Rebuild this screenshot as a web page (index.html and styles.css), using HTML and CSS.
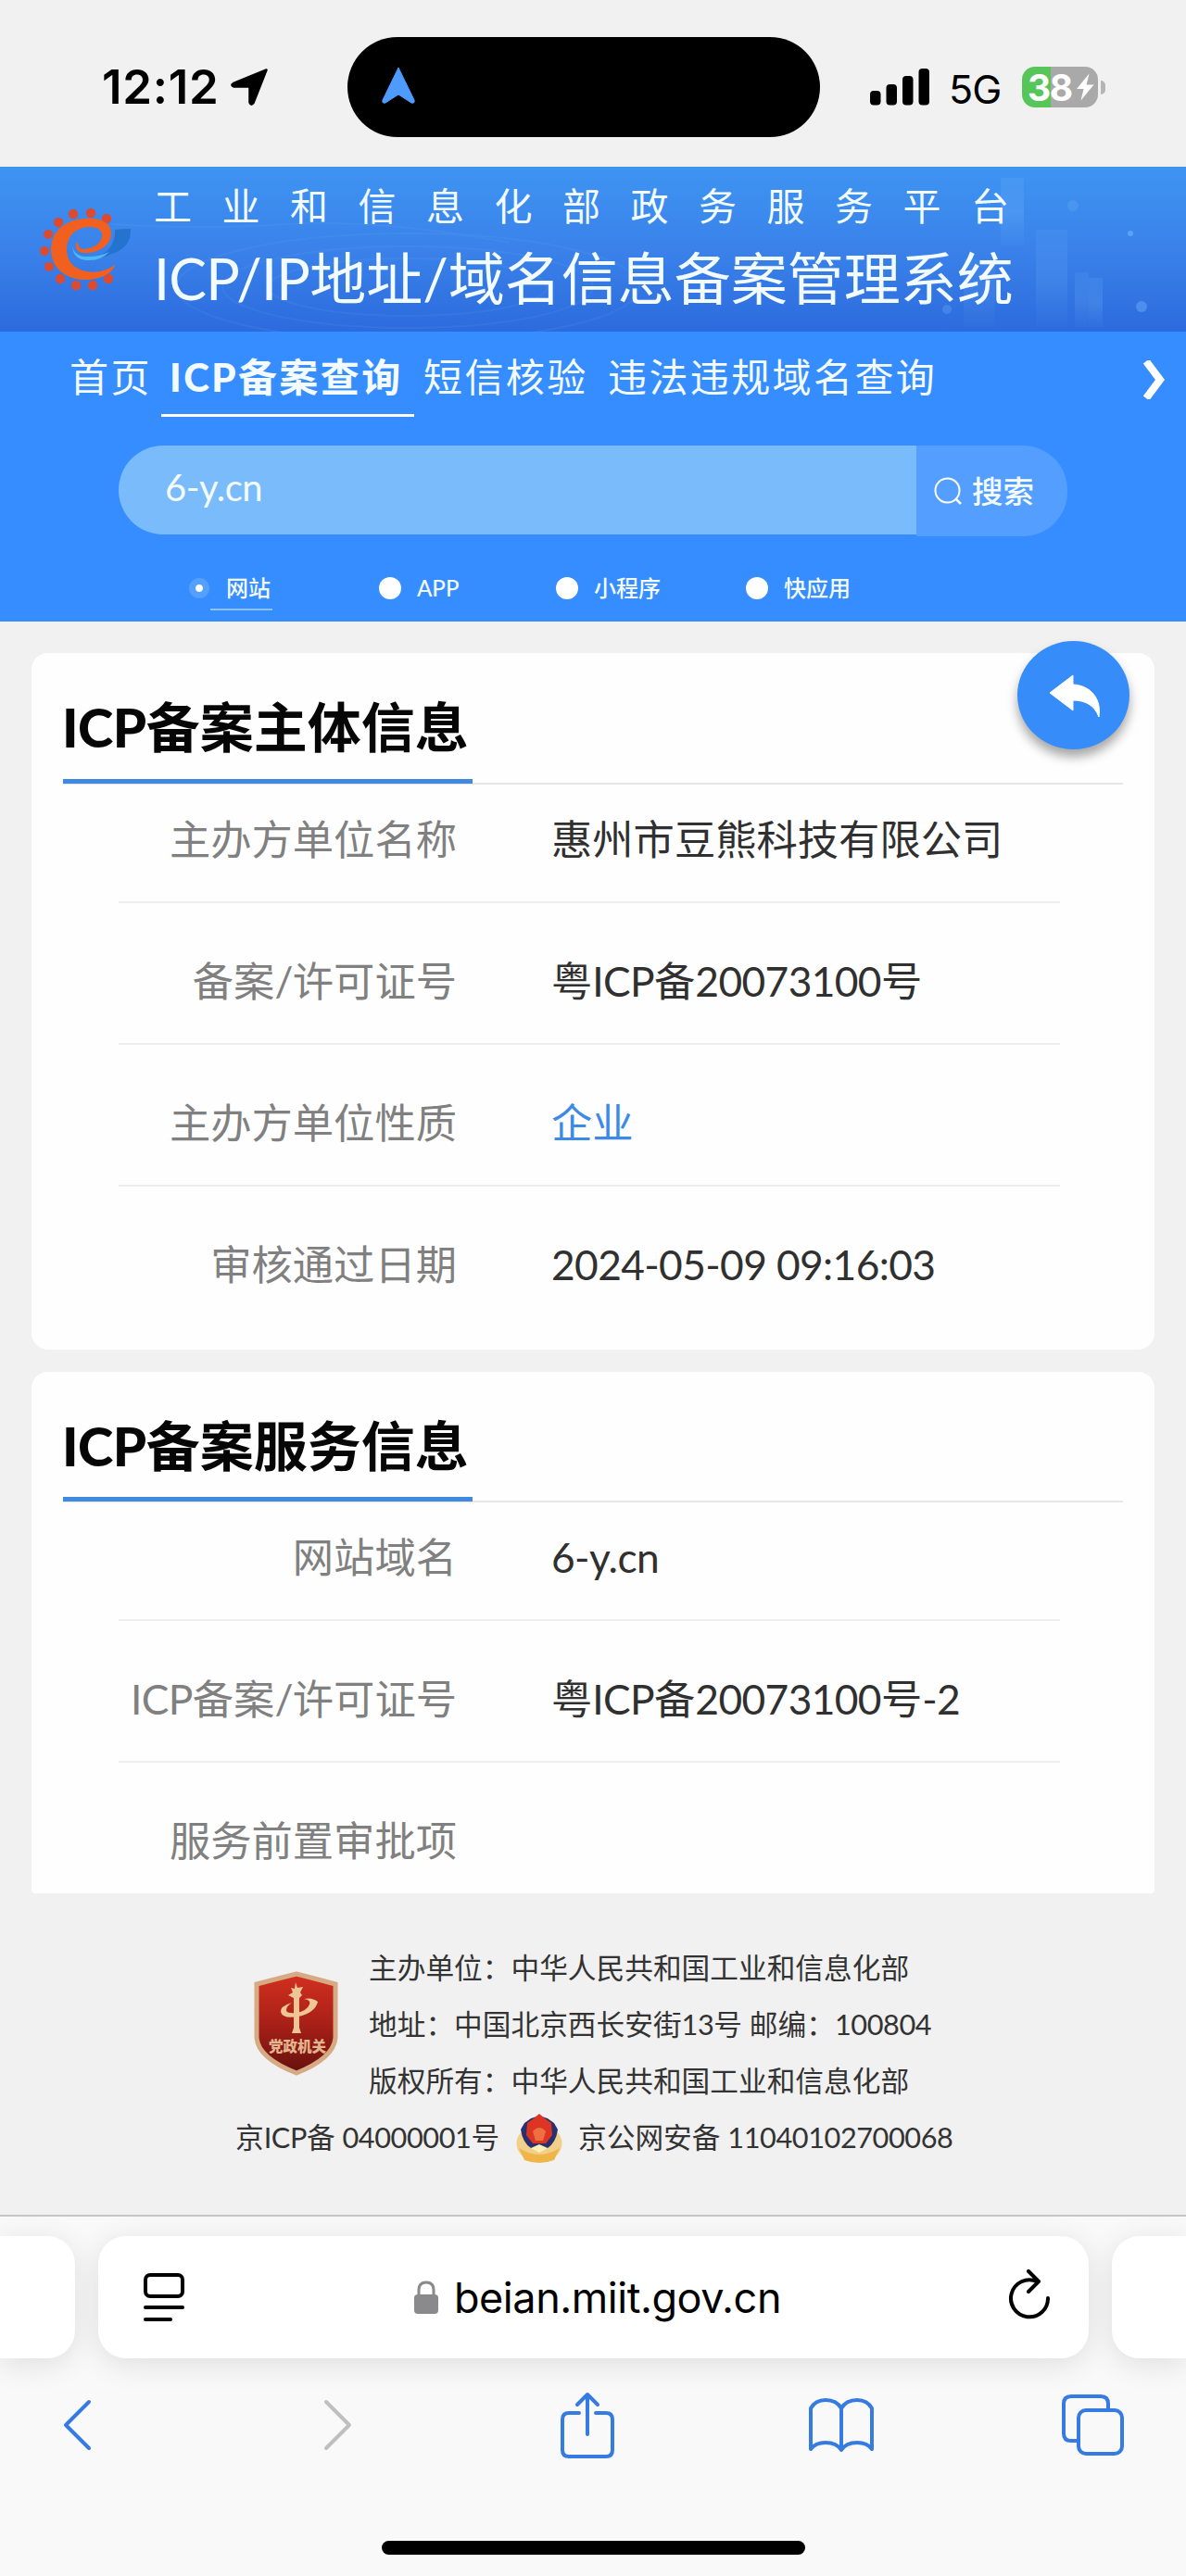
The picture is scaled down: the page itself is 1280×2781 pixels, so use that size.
FILE: index.html
```html
<!DOCTYPE html>
<html lang="zh-CN">
<head>
<meta charset="utf-8">
<title>ICP/IP地址/域名信息备案管理系统</title>
<link rel="stylesheet" href="styles.css">
</head>
<body>
<div class="statusbar">
  <div class="clock"><span class="time">12:12</span>
    <svg class="loc" width="40" height="40" viewBox="0 0 40 40"><path d="M38.500 1.500 24.500 37q-2.500 3.500-4-.5V19.500H3.500q-4-1.500-.5-3.500z" stroke="#000" stroke-width="2.500" stroke-linejoin="round"/></svg>
  </div>
  <div class="island"><svg width="38" height="41" viewBox="0 0 38 41"><path d="M19 1 36 36q1 4-3 3L19 30 5 39q-4 1-3-3z" fill="#4e9bff" stroke="#4e9bff" stroke-linejoin="round"/></svg></div>
  <div class="signals">
    <svg class="bars" width="66" height="40" viewBox="0 0 66 40"><rect x="0" y="24" width="11.500" height="15.500" rx="4"/><rect x="17.500" y="17" width="11.500" height="22.500" rx="4"/><rect x="35" y="8" width="11.500" height="31.500" rx="4"/><rect x="52.500" y="0" width="11.500" height="39.500" rx="4"/></svg>
    <span class="net">5G</span>
    <div class="battery"><span>38</span><svg width="20" height="30" viewBox="0 0 20 30"><path d="M14.500.500 1 17h7.500L5.500 29.500 19.500 12.500h-8z" fill="#fff"/></svg></div>
    <i class="nub"></i>
  </div>
</div>

<header class="banner">
  <svg class="skyline" width="1280" height="178" viewBox="0 0 1280 178">
    <defs><linearGradient id="beam" x1="0" y1="0" x2="0" y2="1"><stop offset="0" stop-color="#8fd0ff" stop-opacity=".6"/><stop offset=".5" stop-color="#8fd0ff"/><stop offset="1" stop-color="#8fd0ff" stop-opacity=".1"/></linearGradient></defs>
    <g fill="url(#beam)"><rect x="1080" y="12" width="25" height="74" opacity=".17"/><rect x="1118" y="68" width="34" height="106" opacity=".12"/><rect x="1160" y="114" width="15" height="60" opacity=".14"/><rect x="1175" y="120" width="15" height="54" opacity=".17"/><rect x="1040" y="100" width="34" height="74" opacity=".1"/></g>
    <g fill="#8fd0ff"><circle cx="1232" cy="151" r="6" opacity=".3"/><circle cx="1220" cy="72" r="3" opacity=".4"/><circle cx="1158" cy="42" r="6" opacity=".15"/><circle cx="1022" cy="154" r="5" opacity=".2"/></g>
    <g fill="none" stroke="#8fc4ff" stroke-width="2" opacity=".08"><ellipse cx="440" cy="130" rx="250" ry="58"/><ellipse cx="440" cy="130" rx="200" ry="44"/><ellipse cx="440" cy="130" rx="150" ry="31"/><path d="M120 62q90 6 190 0t240 20"/></g>
  </svg>
  <svg class="logo" width="104" height="96" viewBox="0 0 104 96">
    <path d="M84 24q10-1 17-1 1 20-20 27-8 4-16 4 20-10 19-30z" fill="#2673cf"/>
    <path d="M38 42q3 12 18 11 12 0 22-5-10 10-24 9-15-1-16-15z" fill="#4fb9f6"/>
    <g fill="#dc4a30"><circle cx="75" cy="12" r="5.200"/><circle cx="58" cy="6" r="5.200"/><circle cx="39" cy="7" r="5.200"/><circle cx="23" cy="16" r="5.200"/><circle cx="12" cy="29" r="5"/><circle cx="8" cy="47" r="5"/><circle cx="13" cy="64" r="5"/><circle cx="25" cy="77" r="5.200"/><circle cx="42" cy="84" r="5.200"/><circle cx="60" cy="84" r="5.200"/><circle cx="77" cy="77" r="5.200"/></g>
    <path d="M43 37C39 46 46 50 56 49 72 47 81 37 80 26 78 15 66 11 52 12 30 13 15 26 15 45 15 66 32 78 52 78 68 78 82 71 84 62 74 69 62 71 54 69 40 67 32 58 32 45 32 31 42 21 57 21 67 21 71 26 70 32 68 40 58 45 50 45 45 45 46 42 43 37Z" fill="#f2601f"/>
  </svg>
  <div class="titles"><div class="t1">工业和信息化部政务服务平台</div><div class="t2"><span>ICP/IP</span>地址/域名信息备案管理系统</div></div>
</header>

<section class="hero">
  <nav class="nav"><a>首页</a><a class="on"><span>ICP</span>备案查询</a><a>短信核验</a><a>违法违规域名查询</a>
    <svg class="more" width="26" height="42" viewBox="0 0 26 42"><path d="M4 1 19 21 4 41" fill="none" stroke="#fff" stroke-width="8"/></svg></nav>
  <div class="search"><div class="field">6-y.cn</div><div class="btn"><svg width="31" height="31" viewBox="0 0 31 31"><circle cx="14.500" cy="14.500" r="13" fill="none" stroke="#fff" stroke-width="2"/><path d="m24 24 5 5" stroke="#fff" stroke-width="2.500"/></svg><span>搜索</span></div></div>
  <div class="radios"><div class="r1"><i class="sel"></i><b>网站</b></div><div class="r2"><i></i><b>APP</b></div><div class="r3"><i></i><b>小程序</b></div><div class="r4"><i></i><b>快应用</b></div></div>
</section>

<main>
  <section class="card c1">
    <div class="back"><svg width="58" height="48" viewBox="0 0 58 48"><path d="M26 1 1 20l25 19V28c13 0 23 5 28 18C57 26 45 12 26 11z" fill="#fff" stroke="#fff" stroke-linejoin="round"/></svg></div>
    <h2><span><em>ICP</em>备案主体信息</span></h2>
    <dl>
      <div><dt>主办方单位名称</dt><dd>惠州市豆熊科技有限公司</dd></div>
      <div><dt>备案<span class="n">/</span>许可证号</dt><dd>粤<span class="n">ICP</span>备<span class="n">20073100</span>号</dd></div>
      <div><dt>主办方单位性质</dt><dd class="link">企业</dd></div>
      <div><dt>审核通过日期</dt><dd class="n">2024-05-09 09:16:03</dd></div>
    </dl>
  </section>
  <section class="card c2">
    <h2><span><em>ICP</em>备案服务信息</span></h2>
    <dl>
      <div><dt>网站域名</dt><dd class="n">6-y.cn</dd></div>
      <div><dt><span class="n">ICP</span>备案<span class="n">/</span>许可证号</dt><dd>粤<span class="n">ICP</span>备<span class="n">20073100</span>号<span class="n">-2</span></dd></div>
      <div><dt>服务前置审批项</dt><dd></dd></div>
    </dl>
  </section>
</main>

<footer>
  <div class="org">
    <svg width="92" height="113" viewBox="0 0 92 113">
      <defs><linearGradient id="red" x1="0" y1="0" x2="0" y2="1"><stop offset="0" stop-color="#d2301f"/><stop offset=".5" stop-color="#a92018"/><stop offset="1" stop-color="#64110e"/></linearGradient></defs>
      <path d="M3 14Q26 8 46 3q20 5 42 11v58q-2 22-42 38Q5 94 3 72z" fill="url(#red)" stroke="#d6aa83" stroke-width="5"/>
      <path d="m45 12 2 6 6-1-3 6 2 3-3 3v32l2 6H41l2-6V29l-6-3 5-3-2-5 4 1z" fill="#f0c595"/>
      <path d="M41 34q-13 4-12 10 2 8 19 5 18-4 21-16-6-5-15-3 8 1 6 6-3 7-14 9-11 1-11-3 0-4 6-8z" fill="#f0c595"/>
      <text x="47" y="87" text-anchor="middle" class="seal">党政机关</text>
    </svg>
    <div class="lines"><p>主办单位：中华人民共和国工业和信息化部</p><p>地址：中国北京西长安街<span class="n">13</span>号 邮编：<span class="n">100804</span></p><p>版权所有：中华人民共和国工业和信息化部</p></div>
  </div>
  <div class="reg"><span class="g1">京<span class="n">ICP</span>备 <span class="n">04000001</span>号</span>
    <svg width="52" height="56" viewBox="0 0 52 56"><ellipse cx="26" cy="33" rx="24.500" ry="20" fill="#f0d08a"/><path d="M4 38q22 14 44 0l-6 13q-16 6-32 0z" fill="#efb547"/><path d="M10 11l7-5q9-4 18 0l7 5 4 7q-2 14-11 20H17Q8 32 6 18z" fill="#29306f"/><path d="M26 1l6 5 7 5 1 13-7 9H19l-7-9 1-13 7-5z" fill="#de3424"/><path d="M19 20q7-8 14 0l-3 10h-8z" fill="#ee7040"/><path d="M17 38l9-4 9 4-9 5z" fill="#fff1b5"/></svg>
    <span class="g2">京公网安备 <span class="n">11040102700068</span></span></div>
</footer>

<div class="browser">
  <div class="tabs"><div class="side left"></div>
    <div class="url">
      <svg class="reader" width="46" height="54" viewBox="0 0 46 54" fill="none" stroke="#000" stroke-width="4" stroke-linecap="round"><rect x="3" y="3" width="40" height="23" rx="5"/><path d="M3 38h40M3 51h27"/></svg>
      <div class="host"><svg width="26" height="36" viewBox="0 0 26 36"><rect y="15" width="26" height="21" rx="4" fill="#8a8a8c"/><path d="M5 17V10q0-8 8-8t8 8v7" fill="none" stroke="#8a8a8c" stroke-width="3"/></svg><span>beian.miit.gov.cn</span></div>
      <svg class="reload" width="46" height="54" viewBox="0 0 46 54" fill="none" stroke="#000" stroke-width="4" stroke-linecap="round" stroke-linejoin="round"><path d="M43 31A20 20 0 1 1 31 13M22 2l11 11-11 11"/></svg>
    </div>
    <div class="side right"></div></div>
  <div class="tools">
    <svg class="prev" width="33" height="56" viewBox="0 0 33 56"><path d="M29 3 4 28l25 25"/></svg>
    <svg class="next" width="33" height="56" viewBox="0 0 33 56"><path d="m4 3 25 25L4 53"/></svg>
    <svg class="share" width="58" height="72" viewBox="0 0 58 72"><path d="M20 23H9q-7 0-7 7v33q0 7 7 7h40q7 0 7-7V30q0-7-7-7H38M29 46V3M18 14 29 3l11 11"/></svg>
    <svg class="book" width="72" height="60" viewBox="0 0 72 60"><path d="M36 12v45M36 12Q31 3 19 3 8 3 3 12v44q5-7 16-7 12 0 17 8 5-8 17-8 11 0 16 7V12Q64 3 53 3q-12 0-17 9z"/></svg>
    <svg width="68" height="66" viewBox="0 0 68 66"><rect x="18" y="17" width="47" height="47" rx="8"/><path d="M18 50h-8q-8 0-8-8V10q0-8 8-8h32q8 0 8 8v7"/></svg>
  </div>
  <div class="home"></div>
</div>
</body>
</html>
```
FILE: styles.css
```css
* { box-sizing: border-box; }
body { margin: 0; width: 1280px; height: 2781px; overflow: hidden; background: #f1f1f1; font-family: Lato, "Noto Sans CJK SC", sans-serif; display: flex; flex-direction: column; color: #333; }
svg { display: block; flex: none; }
p, h2, dl, dd { margin: 0; }
.n { letter-spacing: -.014em; }

.statusbar { height: 180px; display: flex; padding-top: 40px; font-family: Inter, sans-serif; color: #000; }
.clock { width: 375px; height: 108px; padding-left: 110px; display: flex; align-items: center; gap: 10px; }
.time { font-size: 51px; font-weight: 600; line-height: 60px; width: 129px; letter-spacing: .7px; white-space: nowrap; }
.island { width: 510px; height: 108px; border-radius: 54px; background: #000; padding: 32px 0 0 36px; }
.signals { display: flex; padding-left: 54px; align-items: center; height: 108px; }
.net { font-size: 43px; line-height: 50px; margin: 4px 0 0 19px; width: 59px; letter-spacing: -1px; }
.battery { width: 82px; height: 44px; margin-left: 20px; border-radius: 14px; background: linear-gradient(90deg, #57c659 31px, #a9a9a9 31px); display: flex; align-items: center; color: #fff; font-size: 39px; font-weight: 700; padding-left: 6px; }
.battery span { width: 52px; letter-spacing: -1.500px; }
.nub { width: 5px; height: 15px; margin-left: 3px; border-radius: 0 5px 5px 0; background: #b5b5b5; }

.banner { height: 178px; display: flex; position: relative; background: linear-gradient(180deg, #3e94f2, #3a82ea 50%, #2c6bdd); color: #f2fbff; }
.skyline { position: absolute; left: 0; top: 0; }
.logo { margin: 44px 0 0 40px; position: relative; }
.titles { position: relative; margin-left: 22px; padding-top: 13px; white-space: nowrap; }
.t1 { font-size: 41px; line-height: 60px; letter-spacing: 32.500px; }
.t2 { font-size: 61px; line-height: 80px; margin-top: 8px; }
.t2 span { letter-spacing: -.8px; }

.hero { height: 313px; background: #368dff; color: #f4fbff; }
.nav { height: 92px; display: flex; padding: 0 0 0 75px; font-size: 42px; line-height: 98px; letter-spacing: 2.400px; white-space: nowrap; }
.nav a:nth-child(1) { width: 99px; }
.nav .on { width: 273px; margin-right: 10px; padding-left: 9px; font-weight: 700; border-bottom: 3px solid #fff; }
.nav .on span { font-weight: 900; }
.nav a:nth-child(3) { width: 199px; }
.more { margin: 31px 21px 0 auto; }
.search { margin: 31px 128px 0; height: 98px; display: flex; align-items: flex-start; }
.field { width: 861px; height: 96px; border-radius: 48px 0 0 48px; background: #7abcfb; padding-left: 50px; font-size: 40px; line-height: 91px; letter-spacing: -.5px; }
.btn { width: 163px; height: 98px; border-radius: 0 48px 48px 0; background: #549eff; display: flex; align-items: center; padding-left: 19px; gap: 10px; font-size: 33.500px; font-weight: 500; }
.btn span { margin-top: -3px; }
.radios { display: flex; height: 50px; margin: 31px 0 0 204px; font-size: 24px; }
.radios div { display: flex; align-items: center; height: 50px; gap: 17px; }
.radios b { font-weight: 500; line-height: 44px; }
.radios i { width: 24px; height: 24px; border-radius: 50%; background: #fff; }
.r1 { width: 205px; } .r2 { width: 191px; } .r3 { width: 205px; }
.radios .sel { width: 22px; height: 22px; background: radial-gradient(circle, #fff 3.500px, #559fff 4.500px); }
.radios .sel + b { border-bottom: 2px solid #8fc2ff; padding: 0 2px 0 17px; margin-left: -16px; height: 46px; margin-top: 1px; }

.card { position: relative; margin: 0 34px; width: 1212px; background: #fefefe; padding: 0 34px; }
.c1 { margin-top: 34px; height: 752px; border-radius: 18px; }
.c2 { margin-top: 24px; height: 563px; border-radius: 18px 18px 4px 4px; }
h2 { height: 142px; border-bottom: 2px solid #e4e6ea; display: flex; font-size: 58px; color: #060606; font-weight: 700; white-space: nowrap; }
h2 span { height: 141px; width: 442px; border-bottom: 5px solid #3f89de; line-height: 160px; }
h2 em { font-style: normal; font-weight: 900; letter-spacing: -.5px; margin-left: -1px; }
.c2 h2 { height: 141px; }
.c2 h2 span { height: 140px; }
dl { margin: 0 68px 0 60px; font-size: 44.300px; }
dl div { height: 153px; border-bottom: 2px solid #eee; display: flex; line-height: 167px; white-space: nowrap; }
dl div:first-child { height: 128px; line-height: 118px; }
dl div:last-child { border: 0; }
dt { width: 365px; margin-right: 102px; text-align: right; color: #808080; }
dd { color: #303030; }
.link { color: #3c8ae6; }
.back { position: absolute; left: 1064px; top: -13px; width: 121px; height: 117px; border-radius: 50%; background: #368dfa; box-shadow: 0 8px 12px rgba(0,0,0,.35); padding: 36px 0 0 34px; }

footer { height: 347px; padding-top: 50px; font-size: 30.700px; white-space: nowrap; }
.org { display: flex; padding-left: 274px; }
.org svg { margin-top: 34px; }
.lines { margin-left: 32px; }
.lines p { line-height: 61px; }
.seal { font-size: 15.500px; font-weight: 900; fill: #e3b48e; }
.reg { display: flex; padding-left: 254px; line-height: 61px; }
.reg svg { margin: 4px 16px 0 17px; }
.g1 { width: 285px; }

.browser { height: 390px; background: #f9f9f9; border-top: 2px solid #c6c6c8; }
.tabs { display: flex; gap: 25px; margin-top: 21px; }
.side, .url { height: 132px; background: #fff; box-shadow: 0 6px 32px rgba(0,0,0,.11); }
.left { width: 81px; border-radius: 0 30px 30px 0; }
.right { width: 80px; border-radius: 30px 0 0 30px; }
.url { width: 1069px; border-radius: 30px; display: flex; padding: 0 41px 0 48px; align-items: center; justify-content: space-between; }
.host { display: flex; align-items: center; gap: 17px; font: 45px Inter, sans-serif; letter-spacing: -.45px; color: #000; margin-left: 2px; }
.reload { margin-top: -7px; }
.tools { display: flex; align-items: center; height: 76px; margin: 34px 0 0 67px; fill: none; stroke: #367be2; stroke-width: 4; stroke-linecap: round; stroke-linejoin: round; }
.prev { margin-right: 248px; }
.next { margin-right: 224px; stroke: #bfbfc1; }
.share { margin-right: 209px; }
.book { margin-right: 202px; }
.home { width: 457px; height: 15px; border-radius: 8px; background: #000; margin: 87px auto 0; }
```
